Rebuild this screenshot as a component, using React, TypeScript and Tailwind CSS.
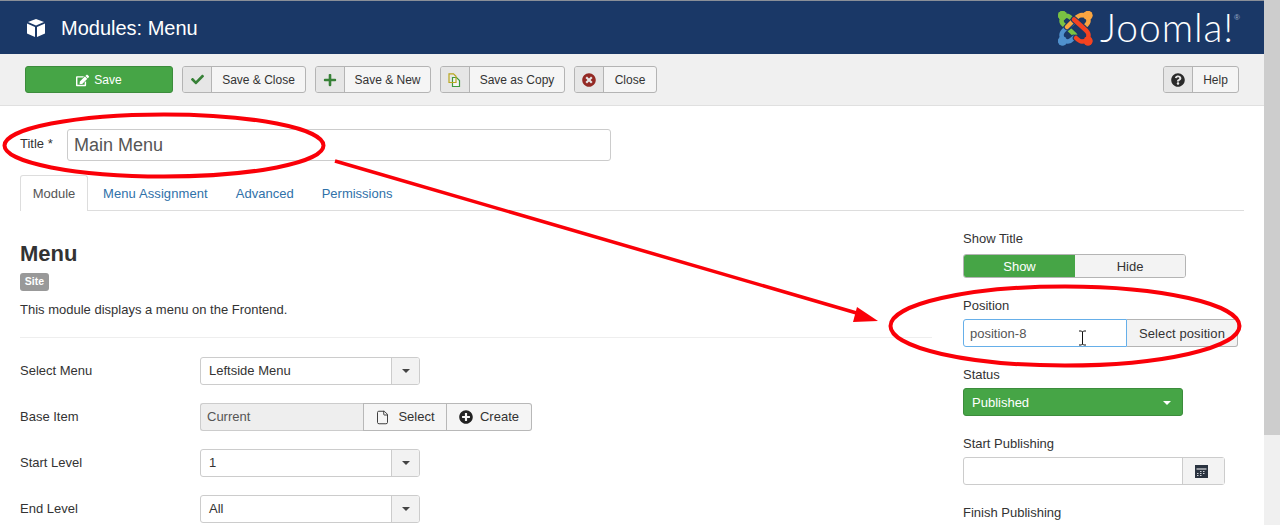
import React from "react";
import { File } from "lucide-react";
import { FaCheck, FaPlus, FaTimesCircle, FaQuestionCircle, FaPlusCircle, FaEdit } from "react-icons/fa";

function Caret({ color = "border-t-[#444]" }: { color?: string }) {
  return <span className={`h-0 w-0 border-x-[4px] border-t-[4px] border-x-transparent ${color}`} />;
}

function CubeIcon() {
  return (
    <svg viewBox="0 0 20 20" className="h-5 w-5" fill="#fff">
      <path d="M10 1 18 4 10 7.400 2 4z" />
      <path d="M1 5.600 9 9v10L1 15.600z" />
      <path d="M19 5.600 11 9v10l8-3.400z" />
    </svg>
  );
}

function CopyIcon() {
  return (
    <svg viewBox="0 0 14 14" className="h-[14px] w-[14px]" fill="#f5f5f5">
      <path d="M4.500 4.500h4l3 3v6h-7z" stroke="#3d9a3d" strokeWidth="1.200" />
      <path d="M1 .8h4.500L8 3.200v6.300H1z" stroke="#b9a71f" strokeWidth="1.200" fill="none" />
    </svg>
  );
}

function CalendarIcon() {
  return (
    <svg viewBox="0 0 13 13" className="h-[13px] w-[13px]" fill="#2a3340">
      <path d="M0 0h13v13H0z" />
      <path d="M1.500 3.500h10v1h-10z" fill="#fff" />
      <path d="M5 6h1.500v1H5zM8 6h1.500v1H8zM2 8h1.500v1H2zM5 8h1.500v1H5zM8 8h1.500v1H8zM2 10h1.500v1H2zM5 10h1.500v1H5z" fill="#cfd3d8" />
    </svg>
  );
}

// four interlocked hooks, each with a navy edge so they look woven
const hooks = [
  { color: "#7ac143", cx: 5.500, cy: 5.500, d: "M5.500 5.500 4.500 11C4.500 14 7 15 10 17.500L18 25" },
  { color: "#7ac143", cx: 5.500, cy: 5.500, d: "M5.500 5.500 11 6C13 6.500 14 8 16 10" },
  { color: "#5091cd", cx: 5.500, cy: 31, d: "M5.500 31 4.500 25C4.500 22 7 20 9 18.500L18 11.500" },
  { color: "#5091cd", cx: 5.500, cy: 31, d: "M5.500 31 11 31.500C13.500 31.500 15 29.500 16.500 28" },
  { color: "#f9a541", cx: 31, cy: 5.500, d: "M31 5.500 25 5C22 5 20.500 6.500 18 9L10 17" },
  { color: "#f9a541", cx: 31, cy: 5.500, d: "M31 5.500 31.500 11C31.500 13 30 14.500 28 16.500" },
  { color: "#f44321", cx: 31, cy: 31, d: "M31 31 31.500 25C31.500 23 30 21 27 18.500L17 9.500" },
  { color: "#f44321", cx: 31, cy: 31, d: "M31 31 25 31.500C22.500 31.500 21 30 19 28" },
];

function JoomlaLogo() {
  return (
    <div className="flex items-center">
      <svg viewBox="0 0 36 36" className="h-[36px] w-[36px] shrink-0" fill="none" strokeLinecap="round">
        {hooks.map((h, i) => (
          <g key={i}>
            <path d={h.d} stroke="#1a3867" strokeWidth="6.500" />
            <path d={h.d} stroke={h.color} strokeWidth="4.500" />
            <circle cx={h.cx} cy={h.cy} r="4.500" fill={h.color} />
          </g>
        ))}
      </svg>
      <span className="ml-[7px] font-['Lato'] text-[39px] font-light leading-none tracking-[0.900px] text-white">Joomla!</span>
      <span className="mb-5 text-[8px] leading-none text-[#9fb0c8]">®</span>
    </div>
  );
}

function ToolButton({ icon, label, w }: { icon: React.ReactNode; label: string; w: string }) {
  return (
    <div className={`flex h-[27px] overflow-hidden rounded-[3px] border border-[#b4b4b4] bg-[#f5f5f5] ${w}`}>
      <span className="flex w-[29px] shrink-0 items-center justify-center border-r border-[#b4b4b4] bg-[#e6e6e6]">{icon}</span>
      <span className="flex flex-1 items-center justify-center pt-px text-[12px]">{label}</span>
    </div>
  );
}

function SelectBox({ value }: { value: string }) {
  return (
    <div className="flex h-[28px] w-[220px] overflow-hidden rounded-[3px] border border-[#ccc]">
      <span className="flex flex-1 items-center pl-2">{value}</span>
      <span className="flex w-[28px] items-center justify-center border-l border-[#ccc] bg-[#f2f2f2]">
        <Caret />
      </span>
    </div>
  );
}

function FormRow({ label, children }: { label: string; children: React.ReactNode }) {
  return (
    <div className="flex h-[28px] items-center">
      <span className="w-[180px]">{label}</span>
      {children}
    </div>
  );
}

export default function App() {
  return (
    <div className="relative flex h-[525px] w-[1280px] overflow-hidden bg-white font-['Liberation_Sans',sans-serif] text-[13px] text-[#333]">
      <div className="w-[1264px]">
        <header className="flex h-[54px] items-center justify-between border-t border-[#8a8f98] bg-[#1a3867] pl-[26px] pr-[24px]">
          <div className="flex items-center gap-[15px] text-[20px] text-white">
            <CubeIcon />
            <span>Modules: Menu</span>
          </div>
          <JoomlaLogo />
        </header>

        <div className="flex h-[52px] items-center justify-between border-b border-[#e0e0e0] bg-[#f0f0f0] pl-[25px] pr-[25px]">
          <div className="flex items-center gap-[9px]">
            <div className="flex h-[27px] w-[148px] items-center justify-center gap-[5px] rounded-[3px] border border-[#3c8c3c] bg-[#46a546] pt-px text-[12px] text-white">
              <FaEdit className="text-[13px]" />
              Save
            </div>
            <ToolButton w="w-[124px]" label="Save & Close" icon={<FaCheck className="text-[13px] text-[#378137]" />} />
            <ToolButton w="w-[116px]" label="Save & New" icon={<FaPlus className="text-[14px] text-[#378137]" />} />
            <ToolButton w="w-[125px]" label="Save as Copy" icon={<CopyIcon />} />
            <ToolButton w="w-[83px]" label="Close" icon={<FaTimesCircle className="text-[14px] text-[#942a25]" />} />
          </div>
          <ToolButton w="w-[76px]" label="Help" icon={<FaQuestionCircle className="text-[14px] text-[#2a2a2a]" />} />
        </div>

        <div className="px-5 pt-[23px]">
          <div className="flex items-center">
            <label className="w-[47px] -translate-y-[1px]">Title *</label>
            <div className="flex h-[32px] w-[544px] items-center rounded-[3px] border border-[#ccc] pl-[6px] text-[18px] text-[#555]">Main Menu</div>
          </div>

          <div className="mt-[14px] flex h-[36px] border-b border-[#ddd]">
            <div className="-mb-px flex w-[68px] items-center justify-center rounded-t-[3px] border border-b-0 border-[#ddd] bg-white pt-px text-[#555]">Module</div>
            <div className="ml-[15px] flex items-center gap-7 pt-[2px] text-[#3071a9]">
              <span className="tracking-[0.100px]">Menu Assignment</span>
              <span>Advanced</span>
              <span>Permissions</span>
            </div>
          </div>

          <div className="flex">
            <div className="w-[912px] pt-[31px]">
              <h2 className="text-[22px] font-bold leading-[24px] text-[#333]">Menu</h2>
              <span className="mt-[7px] flex h-[18px] w-[29px] items-center justify-center rounded-[3px] bg-[#999] text-[10.500px] font-bold text-white">Site</span>
              <p className="mt-[10px] leading-[18px]">This module displays a menu on the Frontend.</p>
              <div className="mt-[18px] border-t border-[#eee]" />
              <div className="mt-[19px] flex flex-col gap-[18px]">
                <FormRow label="Select Menu">
                  <SelectBox value="Leftside Menu" />
                </FormRow>
                <FormRow label="Base Item">
                  <div className="flex h-[28px]">
                    <span className="flex w-[163px] items-center rounded-l-[3px] border border-r-0 border-[#ccc] bg-[#eee] pl-[6px] text-[#555]">Current</span>
                    <span className="flex w-[84px] items-center justify-center gap-[8px] border border-[#b8b8b8] bg-[#f5f5f5]">
                      <File size={15} strokeWidth={1.500} className="text-[#333]" />
                      Select
                    </span>
                    <span className="flex w-[85px] items-center justify-center gap-[7px] rounded-r-[3px] border border-l-0 border-[#b8b8b8] bg-[#f5f5f5]">
                      <FaPlusCircle className="text-[14px] text-[#222]" />
                      Create
                    </span>
                  </div>
                </FormRow>
                <FormRow label="Start Level">
                  <SelectBox value="1" />
                </FormRow>
                <FormRow label="End Level">
                  <SelectBox value="All" />
                </FormRow>
              </div>
            </div>

            <div className="ml-[31px] w-[276px] pt-[19px] leading-[18px]">
              <div>Show Title</div>
              <div className="mt-[6px] flex h-[24px] w-[223px] overflow-hidden rounded-[3px] border border-[#b4b4b4]">
                <span className="flex w-[111px] items-center justify-center bg-[#46a546] pt-px text-white">Show</span>
                <span className="flex flex-1 items-center justify-center bg-[#f3f3f3] pt-px">Hide</span>
              </div>
              <div className="mt-[19px]">Position</div>
              <div className="mt-[4px] flex h-[28px]">
                <span className="flex w-[164px] items-center rounded-l-[3px] border border-[#66afe9] pl-[6px] pt-px text-[#555]">position-8</span>
                <span className="flex w-[111px] items-center justify-center rounded-r-[3px] border border-l-0 border-[#b4b4b4] bg-[#f3f3f3] pt-px tracking-[0.100px]">Select position</span>
              </div>
              <div className="mt-[19px]">Status</div>
              <div className="mt-[4px] flex h-[28px] w-[220px] items-center justify-between rounded-[3px] border border-[#3c8c3c] bg-[#46a546] pl-2 pr-[11px] pt-px text-white">
                Published
                <Caret color="border-t-white" />
              </div>
              <div className="mt-[19px]">Start Publishing</div>
              <div className="mt-[4px] flex h-[28px] w-[262px] rounded-[3px] border border-[#ccc]">
                <span className="flex-1" />
                <span className="flex w-[42px] items-center justify-center border-l border-[#ccc] bg-[#f3f3f3] pr-[4px]">
                  <CalendarIcon />
                </span>
              </div>
              <div className="mt-[19px]">Finish Publishing</div>
            </div>
          </div>
        </div>
      </div>

      <div className="w-4 bg-[#f0f0f0]">
        <div className="h-[435px] bg-[#cdcdcd]" />
      </div>

      {/* red hand-drawn annotation on top of the page */}
      <svg viewBox="0 0 1280 525" className="pointer-events-none absolute inset-0 h-[525px] w-[1280px]" fill="none">
        <ellipse cx="164" cy="145.500" rx="159.500" ry="31" stroke="#fa0008" strokeWidth="4" />
        <ellipse cx="1065" cy="326" rx="174.500" ry="39.500" stroke="#fa0008" strokeWidth="4" />
        <path d="M335 161 860 314" stroke="#fa0008" strokeWidth="3.500" />
        <path d="M878 321 857 307 853 322z" fill="#fa0008" />
        <path d="M1079 331h2.500l1 1 1-1h2.500M1082.500 332v12M1079 345h2.500l1-1 1 1h2.500" stroke="#111" strokeWidth="1" />
      </svg>
    </div>
  );
}
